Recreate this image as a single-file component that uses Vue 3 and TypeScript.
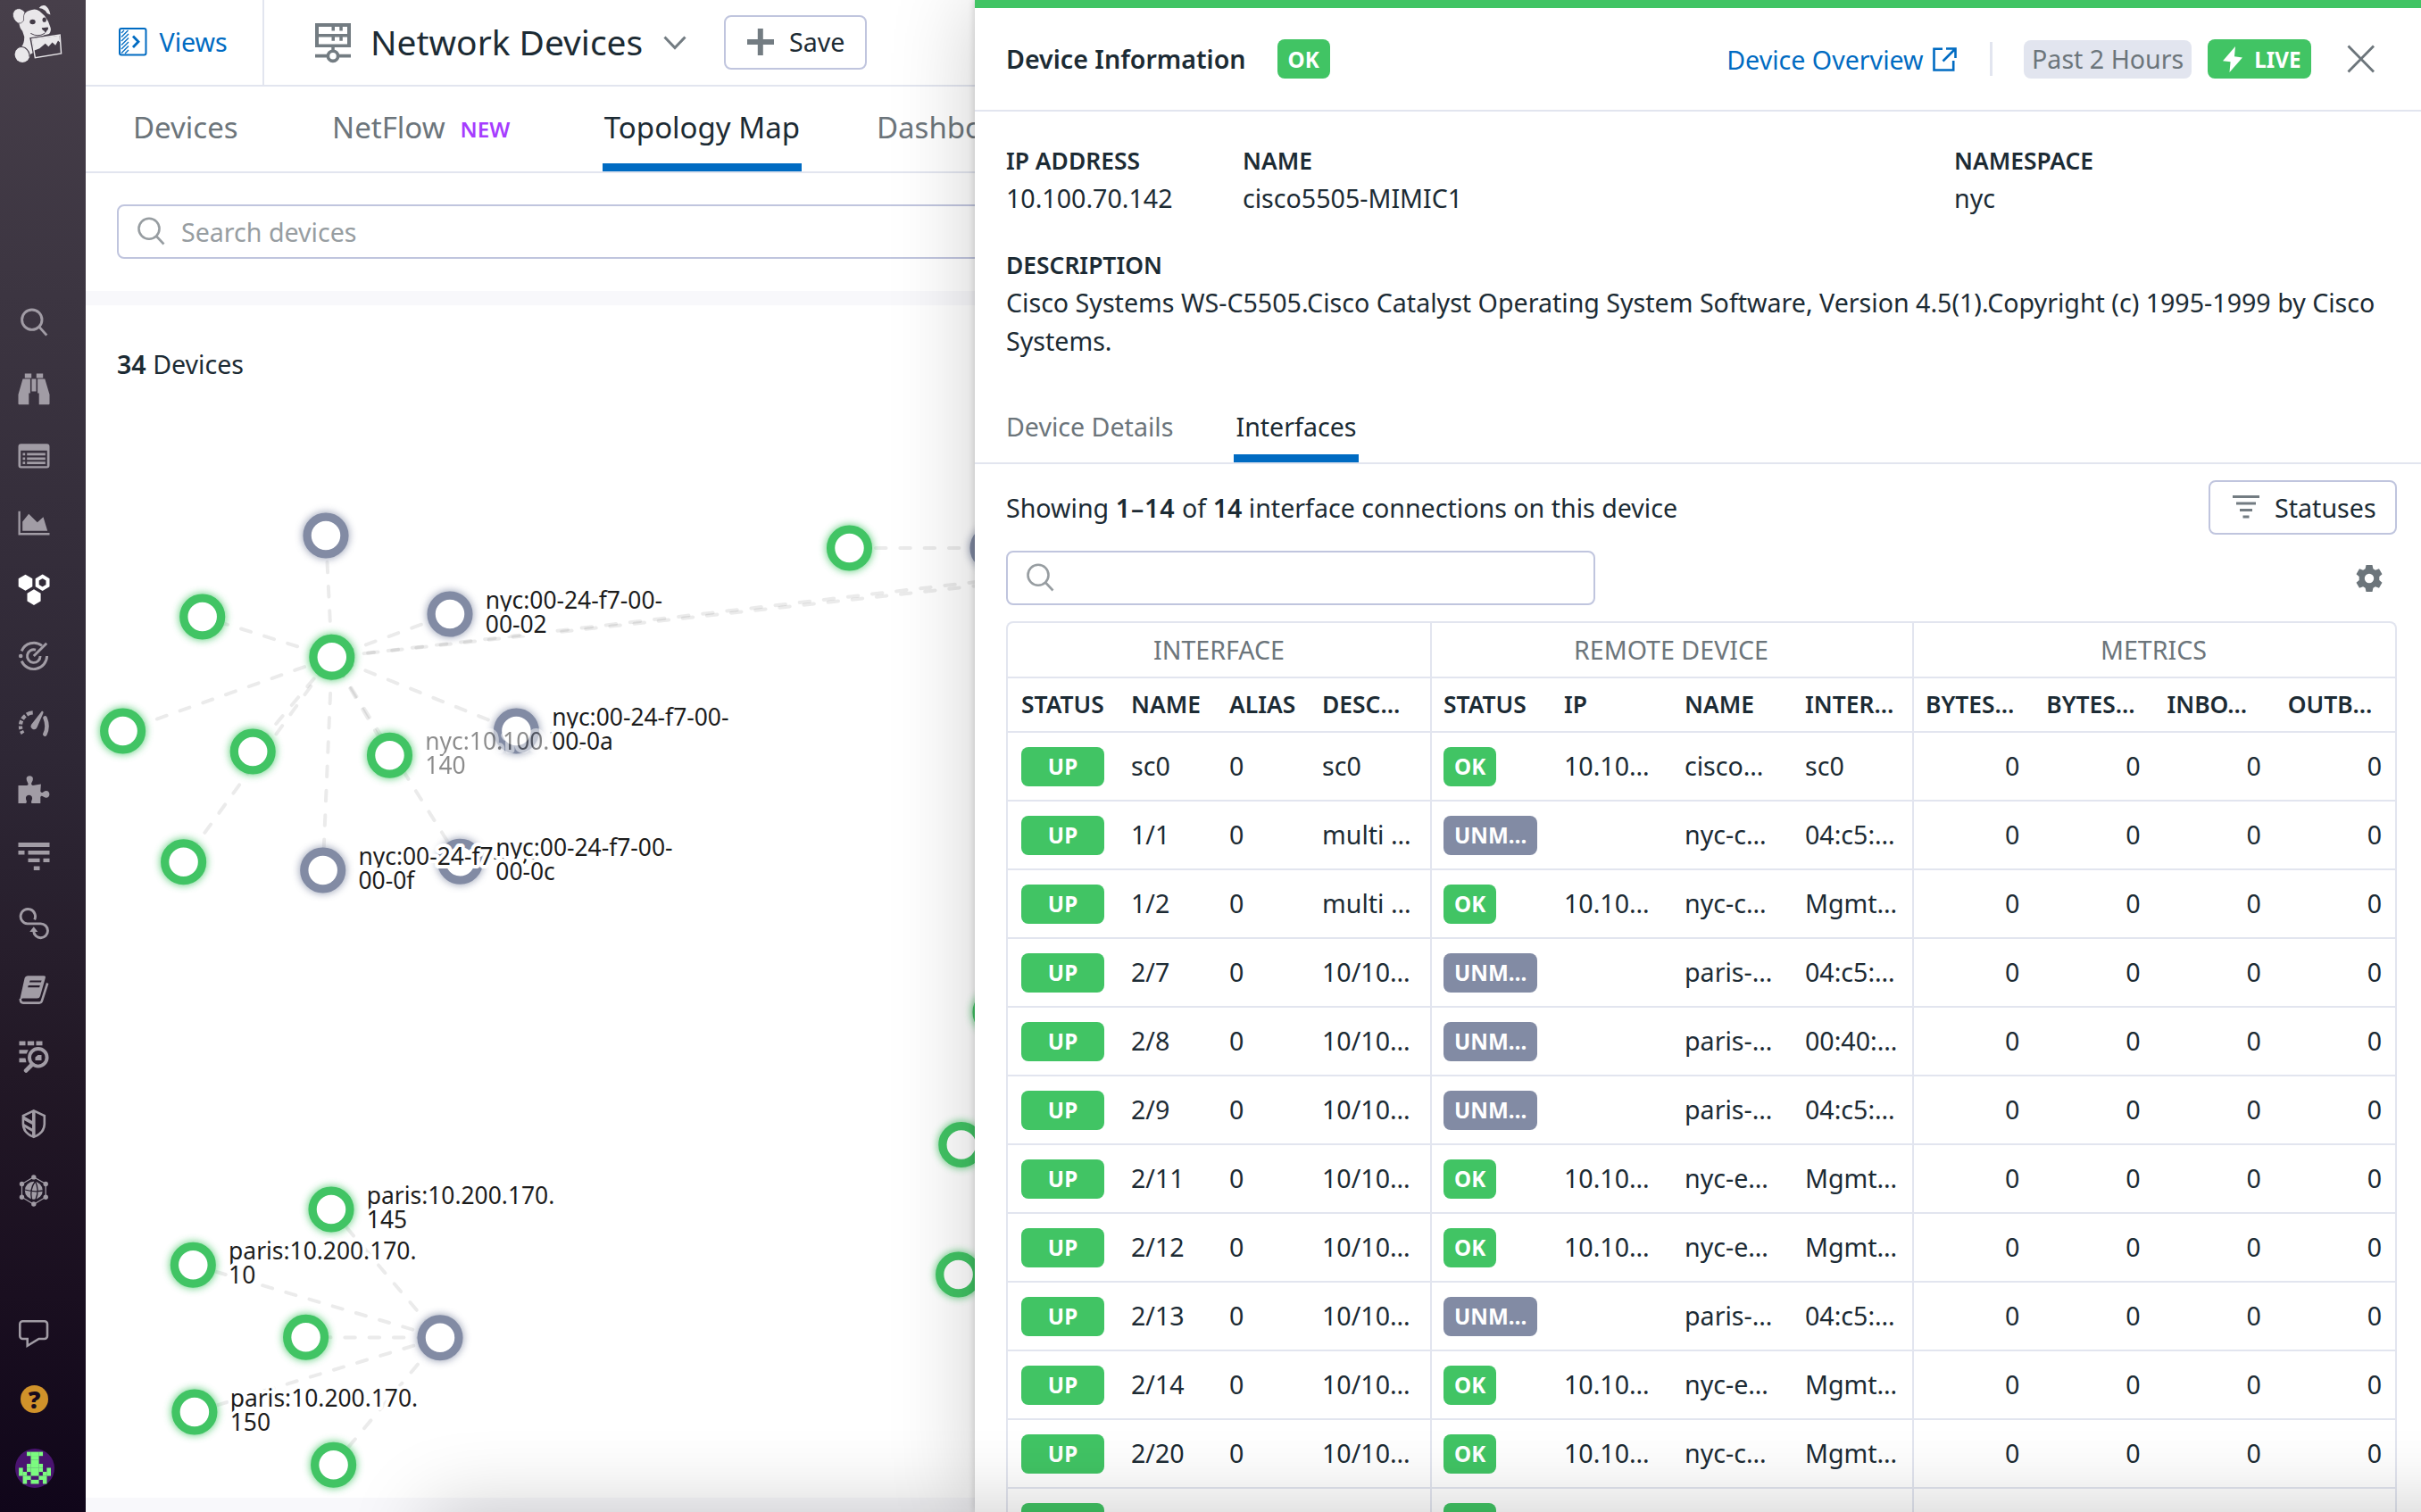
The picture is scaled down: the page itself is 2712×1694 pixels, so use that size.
<script setup lang="ts">
type Tone = 'ok' | 'muted'

interface MapNode {
  x: number
  y: number
  tone: Tone
  label?: [string, string]
  faded?: boolean
}

const nodes: MapNode[] = [
  { x: 365, y: 600, tone: 'muted' },
  { x: 226.7, y: 691, tone: 'ok' },
  { x: 504, y: 688, tone: 'muted', label: ['nyc:00-24-f7-00-', '00-02'] },
  { x: 371.8, y: 736.3, tone: 'ok' },
  { x: 137.6, y: 819, tone: 'ok' },
  { x: 283.2, y: 842, tone: 'ok' },
  { x: 436.5, y: 846.3, tone: 'ok', label: ['nyc:10.100.70.', '140'], faded: true },
  { x: 578.4, y: 819, tone: 'muted', label: ['nyc:00-24-f7-00-', '00-0a'] },
  { x: 205.6, y: 965.7, tone: 'ok' },
  { x: 361.7, y: 975, tone: 'muted', label: ['nyc:00-24-f7-00-', '00-0f'] },
  { x: 515.5, y: 965.3, tone: 'muted', label: ['nyc:00-24-f7-00-', '00-0c'] },
  { x: 951.5, y: 614, tone: 'ok' },
  { x: 1112, y: 614, tone: 'muted' },
  { x: 1115, y: 1134, tone: 'ok' },
  { x: 1076.8, y: 1282.5, tone: 'ok' },
  { x: 1073.6, y: 1428, tone: 'ok' },
  { x: 371, y: 1355, tone: 'ok', label: ['paris:10.200.170.', '145'] },
  { x: 216.3, y: 1417.3, tone: 'ok', label: ['paris:10.200.170.', '10'] },
  { x: 342.6, y: 1498.3, tone: 'ok' },
  { x: 493, y: 1498.7, tone: 'muted' },
  { x: 217.9, y: 1582, tone: 'ok', label: ['paris:10.200.170.', '150'] },
  { x: 373.6, y: 1641.3, tone: 'ok' },
]
const labelled = nodes.filter((n) => n.label)

// x1, y1, x2, y2, distance from the first point to the first dash
type Edge = [number, number, number, number, number]
const edges: Edge[] = [
  [371.8, 736.3, 365, 600, 40.5],
  [371.8, 736.3, 226.7, 691, 40.5],
  [371.8, 736.3, 504, 688, 40.5],
  [137.6, 819, 371.8, 736.3, 40.5],
  [283.2, 842, 371.8, 736.3, 40.5],
  [205.6, 965.7, 371.8, 736.3, 40.5],
  [371.8, 736.3, 436.5, 846.3, 40.5],
  [371.8, 736.3, 578.4, 819, 40.5],
  [371.8, 736.3, 361.7, 975, 40.5],
  [371.8, 736.3, 515.5, 965.3, 40.5],
  [371.8, 736.3, 1200, 639.5, 36],
  [371.8, 736.3, 1200, 644.5, 40.5],
  [951, 614, 1112, 614, 30],
  [493, 1498.7, 371, 1355, 40.5],
  [216.3, 1417.3, 493, 1498.7, 26.5],
  [342.6, 1498.3, 493, 1498.7, 43.7],
  [217.9, 1582, 493, 1498.7, 26.5],
  [493, 1498.7, 373.6, 1641.3, 39],
]

const columns = [
  'STATUS', 'NAME', 'ALIAS', 'DESC…',
  'STATUS', 'IP', 'NAME', 'INTER…',
  'BYTES…', 'BYTES…', 'INBO…', 'OUTB…',
]

interface Row {
  name: string
  desc: string
  ok: boolean
  remote: string
  iface: string
}
const row = (name: string, desc: string, ok: boolean, remote: string, iface: string): Row => ({
  name, desc, ok, remote, iface,
})
const rows: Row[] = [
  row('sc0', 'sc0', true, 'cisco…', 'sc0'),
  row('1/1', 'multi …', false, 'nyc-c…', '04:c5:…'),
  row('1/2', 'multi …', true, 'nyc-c…', 'Mgmt…'),
  row('2/7', '10/10…', false, 'paris-…', '04:c5:…'),
  row('2/8', '10/10…', false, 'paris-…', '00:40:…'),
  row('2/9', '10/10…', false, 'paris-…', '04:c5:…'),
  row('2/11', '10/10…', true, 'nyc-e…', 'Mgmt…'),
  row('2/12', '10/10…', true, 'nyc-e…', 'Mgmt…'),
  row('2/13', '10/10…', false, 'paris-…', '04:c5:…'),
  row('2/14', '10/10…', true, 'nyc-e…', 'Mgmt…'),
  row('2/20', '10/10…', true, 'nyc-c…', 'Mgmt…'),
]

const avatar = [
  '..####..',
  '...##...',
  '...##...',
  '..####..',
  '#.####.#',
  '##.##.##',
  '.##..##.',
  '.#.##.#.',
]
const pixels = avatar.flatMap((line, y) =>
  [...line].map((c, x) => ({ x, y, on: c === '#' })).filter((p) => p.on),
)
</script>

<template>
  <div class="app">
    <aside class="side">
      <svg class="logo" viewBox="36 16 160 196" preserveAspectRatio="none">
        <g fill="#e9e7ea">
          <path d="M72 52 Q84 36 100 34 Q112 30 124 38 L140 54 Q152 70 158 92 Q162 104 154 114 L140 118 Q128 126 112 124 L98 130 L104 176 L92 184 Q82 160 66 158 Q76 148 76 124 L70 104 Q60 92 60 78 Z" />
          <path d="M40 46 Q46 28 62 30 Q74 34 78 42 Q72 52 74 70 Q66 82 56 78 Q38 66 40 46 Z" stroke="#433b47" stroke-width="2" />
          <path d="M122 28 Q130 16 142 20 Q154 28 158 50 L148 46 Q142 34 132 30 Z" />
          <ellipse cx="70" cy="182" rx="24" ry="27" />
          <path d="M48 168 Q60 152 78 160 Q94 172 92 190" fill="none" stroke="#433b47" stroke-width="3" />
          <path d="M98 130 L188 116 L192 180 L110 194 Z" fill="#433b47" stroke="#433b47" stroke-width="9" />
          <path d="M100 131 L188 117 L192 179 L110 193 Z" fill="none" stroke="#e9e7ea" stroke-width="4" />
          <path d="M102 132 L186 119 L188 142 L182 136 L174 152 L164 142 L152 156 L142 146 L124 162 L106 170 Z" />
        </g>
        <g fill="#433b47">
          <ellipse cx="102" cy="74" rx="9" ry="8" />
          <ellipse cx="139" cy="67" rx="6" ry="8" />
          <path d="M131 94 L150 92 Q154 98 146 104 L142 112 L139 104 Q130 100 131 94Z" />
        </g>
        <path d="M96 112 Q118 126 140 112" fill="none" stroke="#433b47" stroke-width="3" />
      </svg>

      <nav class="nav">
        <div class="item"><svg viewBox="0 0 36 36"><circle cx="15.8" cy="15.2" r="11.2" class="ln" /><path d="M24 23.4 32.3 32.6" class="ln" /></svg></div>
        <div class="item"><svg viewBox="0 0 36 36"><path d="M7.8.5h7.4v5H7.8zM20.8.5h7.4v5h-7.4zM15.5 6.5h5v14h-5zM5.5 6.5h8.4v16h-1.6v12.7H1.5a1 1 0 0 1-1-1V24zM30.3 6.5h-8.2v16h1.6v12.7h10.8a1 1 0 0 0 1-1V24z" /></svg></div>
        <div class="item"><svg viewBox="0 0 36 36"><path fill-rule="evenodd" d="M3.5 4.2h29a3 3 0 0 1 3 3v21.3a3 3 0 0 1-3 3h-29a3 3 0 0 1-3-3V7.2a3 3 0 0 1 3-3zM3.2 11.8v17.4h29.6V11.8z" /><path d="M5.5 14.5h2.7v2.7H5.5zM5.5 19.5h2.7v2.7H5.5zM5.5 24.3h2.7V27H5.5zM10.2 14.5h20.6v2.7H10.2zM10.2 19.5h20.6v2.7H10.2zM10.2 24.3h20.6V27H10.2z" /></svg></div>
        <div class="item"><svg viewBox="0 0 36 36"><path d="M.5 4.8h2.3v24.3h32.7v2.3H.5zM5.2 26.8V16.5l7-8.700 9.600 9.400 6.700-6 4.700 15.600z" /></svg></div>
        <div class="item on"><svg viewBox="0 0 36 36"><path d="M8.5.7l7.8 4.5v9L8.5 18.700.7 14.200v-9zM18 17.200l7.600 4.500v8.800L18 35l-7.500-4.500v-8.800z" /><path d="M27.600 2.800l5.900 3.500v6.900l-5.900 3.500-5.900-3.500V6.300z" fill="none" stroke="#fff" stroke-width="4" style="fill: none" /></svg></div>
        <div class="item"><svg viewBox="0 0 36 36"><path d="M4.200 12.400A14.800 14.800 0 0 1 27 6.400M32.600 18A14.800 14.800 0 0 1 4.200 23.600M20 11.100A7.300 7.300 0 1 0 25.100 18M17.800 18 32.200 3.700" class="ln" /><circle cx="3.2" cy="18" r="2.3" /></svg></div>
        <div class="item"><svg viewBox="0 0 36 36"><path d="M5.600 29.800A14.900 14.900 0 0 1 19.500 6.500" fill="none" stroke-width="4.2" stroke="#a19ca5" stroke-dasharray="3.3 2 3.6 2 4.2 2 5 2 7 9" /><path d="M30.600 12.500Q34.500 22 30.400 30.600" fill="none" stroke-width="4.6" stroke-linecap="round" stroke="#a19ca5" /><path d="M27 4.500q2.400.5 1.200 3L21.500 23q-1.600 3.200-4.800 1.900-3.400-2-1.600-5.200z" /></svg></div>
        <div class="item"><svg viewBox="0 0 36 36"><path d="M.5 12.900 10 13q2.500-.6 1-3.200-2.300-4-.8-6.200Q13.200.8 16.300 3.600q1.500 2.400-.8 6.200-1.200 2.400 1.200 3.200l9.200-1.600-.6 8.200q.8 2.200 3 .8 3.500-2.300 5.800-.7 2.600 3.200 0 6.400-2.500 1.400-5.600-.7-2.400-1.500-3.200.7V33H15.600q-1.200-1 0-3.500 1.500-4-1.600-5.500-2.600-.8-4.300 1-1.400 1.800-.2 4.800.9 2.200-.5 3.200H.5z" /></svg></div>
        <div class="item"><svg viewBox="0 0 36 36"><path d="M.5 2h35v5H.5zM.5 11h7v4.400h-7zM11.500 11h24v4.400h-24zM11.500 19.700h13V24h-13zM28.500 19.700h7V24h-7zM17.800 28.400h6.700V33h-6.700z" /></svg></div>
        <div class="item"><svg viewBox="0 0 36 36"><path d="M18.700 13.300A8.200 8.200 0 1 0 10.600 17.900H25.500A7.900 7.900 0 1 1 17.700 26" class="ln" /><path d="M17.800 21.300 22.400 27H13.200z" /></svg></div>
        <div class="item"><svg viewBox="0 0 36 36"><path fill-rule="evenodd" d="M11 2.300H29q2.500 0 1.800 2.400L25 25q-.8 2.600-3.300 2.600H5.600q-2.500.2-3.600 2.400L7.600 4.800Q8.400 2.300 11 2.300zM13.600 7.400l-.7 2.200h13l.7-2.200zM11.800 13l-.7 2.200h13l.7-2.200z" /><path d="M2.800 28q0 4.600 3.200 4.600h18q2.200 0 3-2.400L33.200 10.500" class="ln book" /></svg></div>
        <div class="item"><svg viewBox="0 0 36 36"><path d="M1.500.5h7v4.700h-7zM10.800.5h7.400v4.700h-7.400zM20.500.5h7v4.700h-7zM1.500 10.200h10.300l-2 4.300H1.500zM1.500 19.500h7l1 4.700h-8zM19.500 22v-3.500l3-2.500h4v6z" /><circle cx="22.8" cy="18.8" r="9.8" fill="none" stroke="#a19ca5" stroke-width="3.9" /><path d="M15.800 26.800 9.200 33.400" stroke="#a19ca5" stroke-width="4.8" stroke-linecap="round" /></svg></div>
        <div class="item"><svg viewBox="0 0 36 36"><path d="M17.800 3.400 29.800 9V18.500Q29.500 28.500 17.800 32.800 6.200 28.500 5.900 18.500V9z" class="ln book" /><path d="M16 3h3.600v30H16zM6 9l11 6.600v3.800L6 13.500zM6 17.500l11 6.400v3.700L6.600 21.600z" /></svg></div>
        <div class="item"><svg viewBox="0 0 36 36"><path d="M17.800 2.800 31.200 10.500V25.200L17.800 33.200 4.500 25.200V10.500z" fill="none" stroke="#a19ca5" stroke-width="1.3" /><circle cx="17.8" cy="17.8" r="12" fill="#221a29" /><circle cx="17.8" cy="17.8" r="10" /><path d="M19.500 7.500Q13 16 15.500 28M19.500 7.500Q24.500 17 20 28M8 17Q18 20 28 18" fill="none" stroke="#221a29" stroke-width="1.3" /><circle v-for="p in [[17.8, 2.9], [4.5, 10.5], [31.2, 10.5], [4.5, 25.2], [31.2, 25.2], [17.8, 33]]" :key="p.join()" :cx="p[0]" :cy="p[1]" r="2.7" /></svg></div>
      </nav>

      <div class="foot">
        <svg class="chat" viewBox="0 0 36 36"><path d="M5.500 3.200h24.300a3.200 3.200 0 0 1 3.200 3.200V19.800a3.200 3.200 0 0 1-3.200 3.200H23.500L10.700 30.800V23H5.500a3.200 3.200 0 0 1-3.200-3.200V6.400a3.200 3.200 0 0 1 3.200-3.200z" class="ln book" /></svg>
        <div class="help">?</div>
        <svg class="avatar" viewBox="0 0 44 44">
          <circle cx="22" cy="22" r="22" fill="#4a1470" />
          <rect v-for="p in pixels" :key="p.x + '-' + p.y" :x="4.1 + p.x * 4.47" :y="3.6 + p.y * 4.47" width="4.6" height="4.6" fill="#7cfa80" />
        </svg>
      </div>
    </aside>

    <main class="main">
      <header class="top">
        <a class="views">
          <svg width="32" height="32" viewBox="0 0 32 32" fill="none" stroke="#006bc2">
            <rect x="1" y="1" width="29.5" height="29.5" rx="2" stroke-width="2" />
            <path d="M3 6l3-3M3 10.500 10.500 3M3 15 11 7M3 19.500l8-8M3 24l8-8M3 28.500l8-8M7 29l4-4" stroke-width="1.3" />
            <path d="M16 9.500 22 15.700 16 22" stroke-width="2.8" />
          </svg>
          <span>Views</span>
        </a>
        <svg class="devicon" viewBox="0 0 40 45" fill="#737c82">
          <path fill-rule="evenodd" d="M0 0h40v27H0zM4 4v8h32V4zM4 15.500v8h32v-8z" />
          <path d="M18.500 3h3.500v5.500h-3.500zM27.300 3h3.500v5.500h-3.500zM18.500 15h3.500v4.800h-3.500zM27.300 15h3.500v4.800h-3.500zM18.300 26h3.500v5h-3.500zM0 34.700h13.500v3.800H0zM26.500 34.700H40v3.800H26.500z" />
          <circle cx="20" cy="36.8" r="5.6" fill="none" stroke="#737c82" stroke-width="3.6" />
        </svg>
        <h1>Network Devices</h1>
        <svg class="chev" viewBox="0 0 26 16"><path d="M1.500 1.500 13 13.500 24.500 1.500" fill="none" stroke="#737c82" stroke-width="3" /></svg>
        <button class="btn save">
          <svg width="30" height="30" viewBox="0 0 30 30"><path d="M11.800 0h6v12h12.200v6H17.800v12h-6V18H0v-6h11.800z" fill="#737c82" /></svg>
          <span>Save</span>
        </button>
      </header>

      <div class="tabs">
        <span class="tab">Devices</span>
        <span class="tab flow">NetFlow<b>NEW</b></span>
        <span class="tab active">Topology Map</span>
        <span class="tab">Dashboards</span>
      </div>

      <div class="filter">
        <div class="input">
          <svg width="31" height="32" viewBox="0 0 31 32" fill="none" stroke="#979da1" stroke-width="2.6"><circle cx="13" cy="13.3" r="11.5" /><path d="M21 21.500 29.500 30.500" /></svg>
          <span>Search devices</span>
        </div>
      </div>

      <section class="map">
        <p class="count"><b>34</b> Devices</p>
        <svg class="graph" viewBox="96 342 2616 1336">
          <defs>
            <filter id="glow" x="-60%" y="-60%" width="220%" height="220%"><feGaussianBlur stdDeviation="4" /></filter>
          </defs>
          <line
            v-for="(e, i) in edges" :key="i" class="edge"
            :x1="e[0]" :y1="e[1]" :x2="e[2]" :y2="e[3]" :stroke-dashoffset="27.3 - (e[4] % 27.3)"
          />
          <g v-for="(n, i) in nodes" :key="'n' + i" :class="n.tone">
            <circle :cx="n.x" :cy="n.y" r="26.5" class="halo" filter="url(#glow)" />
            <circle :cx="n.x" :cy="n.y" r="20.9" class="ring" />
          </g>
          <text v-for="(n, i) in labelled" :key="'l' + i" class="label" :class="{ faded: n.faded }">
            <tspan :x="n.x + 39.8" :y="n.y - 6">{{ n.label![0] }}</tspan>
            <tspan :x="n.x + 39.8" :y="n.y + 20.7">{{ n.label![1] }}</tspan>
          </text>
        </svg>
      </section>
    </main>

    <section class="panel">
      <header class="phead">
        <h2>Device Information</h2>
        <span class="badge ok">OK</span>
        <a class="overview">
          <span>Device Overview</span>
          <svg width="27" height="27" viewBox="0 0 27 27" fill="none" stroke="#006bc2" stroke-width="2.6"><path d="M11 1.800H1.500v23.700h21.700V15M15 1.500h10.500V12M25 2 11.500 15.500" /></svg>
        </a>
        <i class="rule"></i>
        <span class="range">Past 2 Hours</span>
        <span class="badge ok live">
          <svg width="22" height="29" viewBox="0 0 22 29"><path d="M14 0 0 16.200 8.600 17.200 7.500 29 22 12.500 13 11.300z" fill="#fff" /></svg>
          LIVE
        </span>
        <svg class="close" viewBox="0 0 32 32"><path d="M1.500 1.500 30 30.500M30 1.500 1.500 30.500" stroke="#6c757b" stroke-width="2.8" /></svg>
      </header>

      <dl class="info">
        <div class="f1"><dt>IP ADDRESS</dt><dd>10.100.70.142</dd></div>
        <div class="f2"><dt>NAME</dt><dd>cisco5505-MIMIC1</dd></div>
        <div><dt>NAMESPACE</dt><dd>nyc</dd></div>
        <div class="wide"><dt>DESCRIPTION</dt><dd>Cisco Systems WS-C5505.Cisco Catalyst Operating System Software, Version 4.5(1).Copyright (c) 1995-1999 by Cisco<br />Systems.</dd></div>
      </dl>

      <div class="ptabs">
        <span>Device Details</span>
        <span class="active">Interfaces</span>
      </div>

      <div class="body">
        <div class="line">
          <p>Showing <b class="span">1–14</b> of <b>14</b> interface connections on this device</p>
          <button class="btn">
            <svg width="30" height="26" viewBox="0 0 30 26" fill="#737c82"><path d="M0 0h30v3H0zM4 7.600h22v3H4zM8 15h14v3H8zM11.500 22.400h7v3h-7z" /></svg>
            <span>Statuses</span>
          </button>
        </div>
        <div class="line second">
          <div class="input small">
            <svg width="31" height="32" viewBox="0 0 31 32" fill="none" stroke="#979da1" stroke-width="2.6"><circle cx="13" cy="13.3" r="11.5" /><path d="M21 21.500 29.500 30.500" /></svg>
          </div>
          <svg class="gear" viewBox="0 0 30 30"><path fill-rule="evenodd" fill="#6c757b" d="M11.500 0h7l.9 4.300 2.500 1.400 4.100-1.500 3.500 6-3.200 2.900v3.800l3.200 2.900-3.500 6-4.100-1.500-2.500 1.400-.9 4.300h-7l-.9-4.300-2.500-1.400L4 25.800l-3.500-6 3.200-2.900v-3.800L.5 10.200l3.500-6 4.100 1.500 2.500-1.400zM15 9.800a5.200 5.200 0 1 0 0 10.400 5.200 5.200 0 0 0 0-10.400z" /></svg>
        </div>

        <div class="table">
          <div class="groups"><span>INTERFACE</span><span>REMOTE DEVICE</span><span>METRICS</span></div>
          <div class="tr th"><span v-for="(c, i) in columns" :key="i">{{ c }}</span></div>
          <div v-for="(r, i) in rows" :key="i" class="tr">
            <span><em class="badge ok up">UP</em></span>
            <span>{{ r.name }}</span>
            <span>0</span>
            <span>{{ r.desc }}</span>
            <span><em class="badge" :class="r.ok ? 'ok' : 'muted'">{{ r.ok ? 'OK' : 'UNM…' }}</em></span>
            <span>{{ r.ok ? '10.10…' : '' }}</span>
            <span>{{ r.remote }}</span>
            <span>{{ r.iface }}</span>
            <span class="num">0</span><span class="num">0</span><span class="num">0</span><span class="num">0</span>
          </div>
          <div class="tr">
            <span><em class="badge ok up"></em></span><span></span><span></span><span></span>
            <span><em class="badge ok blank"></em></span><span></span><span></span><span></span>
            <span></span>
          </div>
        </div>
      </div>
    </section>
    <div class="shade"></div>
  </div>
</template>

<style>
body {
  overflow: hidden;
}
</style>

<style scoped>
* {
  box-sizing: border-box;
}
.app {
  position: relative;
  display: flex;
  width: 2712px;
  height: 1694px;
  overflow: hidden;
  background: #fff;
  color: #1c2b34;
  font: 28.6px/43px 'Noto Sans', sans-serif;
}
h1, h2, p, dl, dd {
  margin: 0;
  font-weight: 400;
}
b {
  font-weight: 600;
}
svg {
  display: block;
  flex: none;
}
.side {
  width: 96px;
  flex: none;
  display: flex;
  flex-direction: column;
  background: linear-gradient(#473f4a 0, #3c3541 330px, #2e2735 850px, #221826 1200px, #1a0f20 1450px, #10061a 1694px);
}
.logo {
  width: 57px;
  height: 66px;
  margin: 5px 0 0 13px;
}
.nav {
  margin-top: 253px;
}
.item {
  height: 74.8px;
  padding-left: 20px;
  display: flex;
  align-items: center;
}
.item svg, .chat {
  width: 36px;
  height: 36px;
  fill: #a19ca5;
}
.item.on svg {
  fill: #fff;
}
.ln {
  fill: none;
  stroke: #a19ca5;
  stroke-width: 2.9;
}
.ln.book {
  stroke-width: 2.6;
}
.foot {
  margin-top: 106px;
  padding-left: 17px;
}
.chat {
  margin-left: 3px;
}
.help {
  width: 31px;
  height: 31px;
  margin: 39px 0 0 6px;
  border-radius: 50%;
  background: #d0922a;
  color: #170a1c;
  font-size: 27px;
  font-weight: 900;
  line-height: 31px;
  text-align: center;
}
.avatar {
  width: 44px;
  height: 44px;
  margin-top: 40px;
}

.main {
  flex: none;
  width: 2616px;
  display: flex;
  flex-direction: column;
  background: linear-gradient(#fff 1678px, #f8f8fb 1678px);
}
.top {
  height: 97px;
  flex: none;
  display: flex;
  align-items: center;
  padding-bottom: 1px;
  border-bottom: 2px solid #e2e5ef;
}
.views {
  width: 200px;
  height: 95px;
  padding: 0 0 1px 37px;
  display: flex;
  align-items: center;
  gap: 13.5px;
  color: #006bc2;
  border-right: 2px solid #e2e5ef;
}
.devicon {
  width: 40px;
  height: 45px;
  margin: 3px 0 0 57px;
}
h1 {
  margin: 0 0 2px 22px;
  width: 304px;
  white-space: nowrap;
  font-size: 38.9px;
}
.chev {
  width: 26px;
  height: 16px;
  margin: 2px 0 0 24px;
}
.btn {
  height: 61px;
  display: flex;
  align-items: center;
  border: 2px solid #c0c5de;
  border-radius: 8px;
  background: #fff;
  color: inherit;
  font: inherit;
  padding: 0 0 1px;
}
.save {
  margin-left: 42px;
  width: 160px;
  padding-left: 24px;
  gap: 17px;
}
.tabs {
  height: 97px;
  flex: none;
  display: flex;
  border-bottom: 2px solid #e2e5ef;
  padding-left: 51px;
  font-size: 33px;
  color: #6c757b;
}
.tab {
  height: 95px;
  line-height: 92px;
  padding: 0 2px;
  margin-right: 101.5px;
  white-space: nowrap;
}
.tab b {
  position: relative;
  top: -1px;
  font-size: 24.2px;
  color: #a63cff;
  margin-left: 17px;
}
.tab.active, .ptabs .active {
  color: #1c2b34;
  border-bottom: 9px solid #006bc2;
}
.tab.active {
  margin-right: 82px;
}
.filter {
  height: 148px;
  flex: none;
  padding: 35px 35px 0;
  border-bottom: 16px solid #f8f8fb;
}
.input {
  height: 61px;
  display: flex;
  align-items: center;
  gap: 18.5px;
  padding: 0 0 1px 20.5px;
  border: 2px solid #c0c5de;
  border-radius: 8px;
  color: #979da1;
}
.map {
  position: relative;
  flex: none;
  height: 1336px;
  padding: 44px 35px;
}
.graph {
  position: absolute;
  left: 0;
  top: 0;
  width: 2616px;
  height: 1336px;
}
.edge {
  stroke: rgba(0, 0, 0, 0.08);
  stroke-width: 4;
  stroke-linecap: round;
  stroke-dasharray: 11.5 15.8;
}
.ring {
  fill: #fff;
  stroke-width: 9.3;
}
.ok .ring {
  stroke: #41c464;
}
.muted .ring {
  stroke: #828ba4;
}
.halo {
  opacity: 0.75;
}
.ok .halo {
  fill: #41c464;
}
.muted .halo {
  fill: #828ba4;
}
.label {
  font-size: 26.4px;
  fill: #1c1c1c;
  stroke: #fff;
  stroke-width: 8px;
  stroke-linejoin: round;
  paint-order: stroke;
}
.label.faded {
  opacity: 0.5;
}

.panel {
  position: absolute;
  right: 0;
  top: 0;
  width: 1620px;
  height: 1694px;
  background: #fff;
  border-top: 9px solid #41c464;
  clip-path: inset(0 0 0 -120px);
  box-shadow: 0 0 90px rgba(0, 0, 0, 0.2), 0 0 8px rgba(0, 0, 0, 0.18);
}
.phead {
  height: 116px;
  display: flex;
  align-items: center;
  padding: 0 51px 0 35px;
  border-bottom: 2px solid #e2e5ef;
}
h2 {
  margin-bottom: 1.5px;
  font-size: 28.6px;
  font-weight: 600;
}
.badge {
  height: 44px;
  display: inline-flex;
  align-items: center;
  padding: 0 12px;
  border-radius: 8px;
  color: #fff;
  font-size: 24.2px;
  font-weight: 700;
  font-style: normal;
}
.badge.ok {
  background: #41c464;
}
.badge.muted {
  background: #828ba4;
}
.badge.blank {
  width: 59px;
}
h2 + .badge {
  margin-left: 35px;
}
.overview {
  margin-left: auto;
  display: flex;
  align-items: center;
  gap: 10px;
  color: #006bc2;
}
.rule {
  width: 3px;
  height: 38px;
  margin: 0 35.5px 0 37px;
  background: #e2e5ef;
}
.range {
  height: 43px;
  line-height: 42px;
  padding: 0 9px;
  border-radius: 8px;
  background: #e2e5ef;
  color: #6c757b;
}
.live {
  margin-left: 18px;
  padding: 0 11.5px 0 17px;
  gap: 13px;
}
.close {
  width: 32px;
  height: 32px;
  margin-left: 40px;
}
.info {
  display: flex;
  flex-wrap: wrap;
  padding: 35px 0 0 35px;
}
dt {
  height: 39.5px;
  line-height: 40px;
  font-size: 26.4px;
  font-weight: 600;
}
.f1 {
  width: 265px;
}
.f2 {
  width: 797px;
}
.wide {
  width: 100%;
  margin-top: 34.5px;
  white-space: nowrap;
}
.ptabs {
  height: 117.5px;
  display: flex;
  align-items: flex-end;
  gap: 66px;
  padding-left: 33px;
  border-bottom: 2px solid #e2e5ef;
  color: #6c757b;
}
.ptabs span {
  height: 62px;
  padding: 0 2px;
}
.body {
  padding: 18px 27px 0 35px;
}
.line {
  display: flex;
  align-items: center;
  justify-content: space-between;
}
.line p {
  margin-bottom: 1px;
}
.span {
  letter-spacing: 0.9px;
}
.line .btn {
  width: 211px;
  padding-left: 25px;
  gap: 17px;
}
.second {
  margin: 18px 0;
}
.small {
  width: 660px;
}
.gear {
  width: 30px;
  height: 30px;
  margin-right: 16px;
}
.table {
  border: 2px solid #e2e5ef;
  border-radius: 8px 8px 0 0;
  border-bottom: 0;
  height: 998px;
  overflow: hidden;
}
.groups {
  display: grid;
  grid-template-columns: 473px 540px 1fr;
  height: 62px;
  line-height: 60px;
  border-bottom: 2px solid #e2e5ef;
  text-align: center;
  color: #6c757b;
}
.groups span + span {
  padding-right: 2px;
}
.groups span + span, .tr > :nth-child(5), .tr > :nth-child(9) {
  border-left: 2px solid #e2e5ef;
}
.tr {
  display: grid;
  grid-template-columns: 123px 111px 103px 136px repeat(4, 135px) repeat(4, 1fr);
  height: 77px;
  border-bottom: 2px solid #e2e5ef;
}
.tr > span {
  padding: 0 14px 1.5px 15px;
  display: flex;
  align-items: center;
  white-space: nowrap;
  overflow: hidden;
}
.tr > span:has(em) {
  padding-bottom: 0;
}
.tr > :nth-child(3) {
  padding-left: 14px;
}
.tr > :nth-child(5), .tr > :nth-child(9) {
  padding-left: 13px;
}
.tr > .num {
  justify-content: flex-end;
  padding-right: 15px;
}
.th {
  height: 61px;
  font-size: 26.4px;
  font-weight: 600;
}
.th > span {
  padding-bottom: 0;
}
.up {
  width: 93px;
  flex: none;
  justify-content: center;
}
.shade {
  position: absolute;
  left: 490px;
  right: -200px;
  top: 1700px;
  height: 200px;
  box-shadow: 0 0 90px 10px rgba(0, 0, 0, 0.2);
}
</style>
